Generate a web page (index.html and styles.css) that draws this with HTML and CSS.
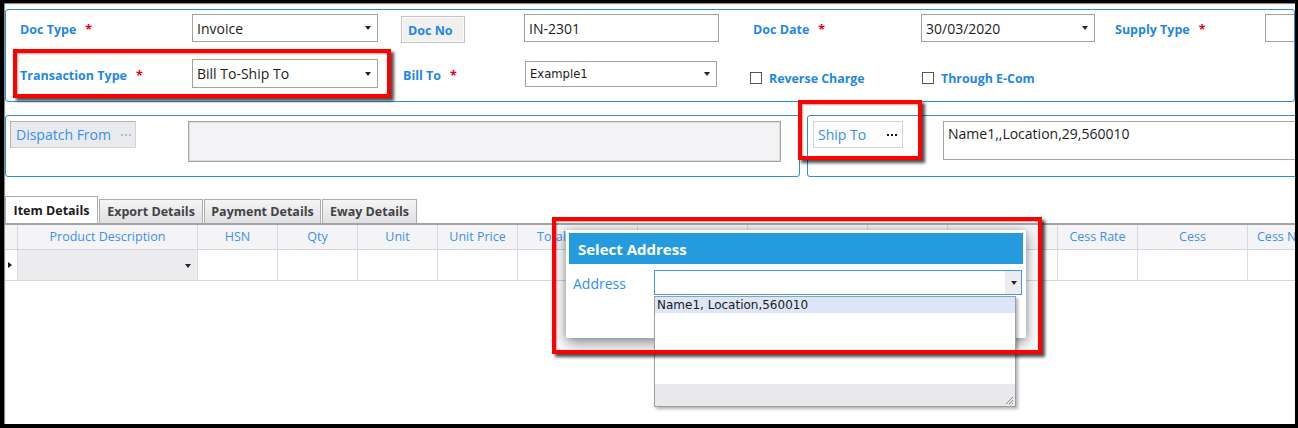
FILE: index.html
```html
<!DOCTYPE html>
<html>
<head>
<meta charset="utf-8">
<title>Invoice</title>
<link rel="stylesheet" href="styles.css">
</head>
<body>
<div class="screen">
  <section class="head-panel">
    <div class="lbl c1">Doc Type<span class="req">*</span></div>
    <div class="combo c2"><span>Invoice</span><i class="arrow"></i></div>
    <div class="btn-docno c4">Doc No</div>
    <div class="input c5">IN-2301</div>
    <div class="lbl lbl-date c7">Doc Date<span class="req">*</span></div>
    <div class="combo c8"><span>30/03/2020</span><i class="arrow"></i></div>
    <div class="lbl c10">Supply Type<span class="req">*</span></div>
    <div class="input input-supply c11"></div>

    <div class="lbl c1 r2">Transaction Type<span class="req">*</span></div>
    <div class="combo c2 r2"><span>Bill To-Ship To</span><i class="arrow"></i></div>
    <div class="lbl lbl-bill c4 r2">Bill To<span class="req">*</span></div>
    <div class="combo combo-small c5 r2"><span>Example1</span><i class="arrow"></i></div>
    <div class="chk c7 r2"><span class="box"></span><span class="chk-text">Reverse Charge</span></div>
    <div class="chk chk-ecom c8 r2"><span class="box"></span><span class="chk-text">Through E-Com</span></div>
  </section>

  <div class="addr-row">
    <div class="addr-panel addr-left">
      <div class="addr-btn addr-btn-dispatch"><span>Dispatch From</span><span class="dots dots-light"><i></i><i></i><i></i></span></div>
      <div class="memo memo-disabled"></div>
    </div>
    <div class="addr-panel addr-right">
      <div class="addr-btn addr-btn-ship"><span>Ship To</span><span class="dots"><i></i><i></i><i></i></span></div>
      <div class="memo memo-ship">Name1,,Location,29,560010</div>
    </div>
  </div>

  <div class="tabs">
    <div class="tab tab-active tab-item">Item Details</div>
    <div class="tab tab-export">Export Details</div>
    <div class="tab tab-payment">Payment Details</div>
    <div class="tab tab-eway">Eway Details</div>
  </div>

  <div class="grid">
    <div class="grow ghead">
      <div class="cell"></div>
      <div class="cell">Product Description</div>
      <div class="cell">HSN</div>
      <div class="cell">Qty</div>
      <div class="cell">Unit</div>
      <div class="cell">Unit Price</div>
      <div class="cell cell-total">Total</div>
      <div class="cell"></div>
      <div class="cell"></div>
      <div class="cell"></div>
      <div class="cell"></div>
      <div class="cell">Cess Rate</div>
      <div class="cell">Cess</div>
      <div class="cell cell-left">Cess N</div>
    </div>
    <div class="grow gdata">
      <div class="cell cell-ind"><i class="ind"></i></div>
      <div class="cell cell-prod"><i class="arrow"></i></div>
      <div class="cell"></div>
      <div class="cell"></div>
      <div class="cell"></div>
      <div class="cell"></div>
      <div class="cell"></div>
      <div class="cell"></div>
      <div class="cell"></div>
      <div class="cell"></div>
      <div class="cell"></div>
      <div class="cell"></div>
      <div class="cell"></div>
      <div class="cell"></div>
    </div>
  </div>

  <div class="dialog">
    <div class="dlg-title">Select Address</div>
    <div class="dlg-body">
      <span class="dlg-label">Address</span>
      <div class="dlg-combo"><span class="dlg-btn"><i class="arrow"></i></span></div>
    </div>
  </div>

  <div class="dropdown">
    <div class="dd-item">Name1, Location,560010</div>
    <div class="dd-fill"></div>
    <div class="dd-foot">
      <svg class="grip" width="10" height="10" viewBox="0 0 10 10">
        <path d="M9 2 L2 9 M9 5 L5 9 M9 8 L8 9" stroke="#8a8a8a" stroke-width="1" fill="none"/>
      </svg>
    </div>
  </div>

  <div class="mark mark-trans"></div>
  <div class="mark mark-ship"></div>
  <div class="mark mark-dialog"></div>
</div>
</body>
</html>
```

FILE: styles.css
```css
* { box-sizing: border-box; }
html, body { margin: 0; padding: 0; }
body {
  background: #000;
  width: 1298px;
  height: 428px;
  overflow: hidden;
  display: flow-root;
  font-family: "Open Sans", "Noto Sans", sans-serif;
}
.screen {
  position: relative;
  margin: 3px 3px 0 4px;
  width: 1291px;
  height: 421px;
  background: #fff;
  overflow: hidden;
  box-shadow: inset 1px 1px 1px rgba(0,0,0,.5);
  display: flow-root;
}

/* ---------- header panel ---------- */
.head-panel {
  margin: 6px 0 0 1px;
  width: 1290px;
  height: 93px;
  border: 1px solid #2d8fd8;
  border-radius: 3px;
  padding: 4px 0 0 14px;
  display: grid;
  grid-template-columns: 172px 186px 23px 123px 195px 31px 171px 174px 20px 150px 1fr;
  grid-template-rows: 28px 29px;
  row-gap: 17px;
  overflow: hidden;
}
.c1 { grid-column: 1; }
.c2 { grid-column: 2; }
.c4 { grid-column: 4; }
.c5 { grid-column: 5; }
.c7 { grid-column: 7; }
.c8 { grid-column: 8; }
.c10 { grid-column: 10; }
.c11 { grid-column: 11; }
.r2 { grid-row: 2; }

.lbl {
  align-self: center;
  padding-top: 3px;
  font-weight: 700;
  font-size: 12.5px;
  color: #1f87e6;
  white-space: nowrap;
}
.lbl-date { padding-left: 3px; }
.lbl-bill { padding-left: 2px; }
.req { color: #e8000b; margin-left: 9px; }

.combo, .input {
  position: relative;
  border: 1px solid #a2a2a2;
  background: #fff;
  display: flex;
  align-items: center;
  padding-left: 4px;
  font-size: 14px;
  color: #1c1c1c;
  white-space: nowrap;
}
.input-supply { width: 80px; }
.combo-small {
  margin-left: 1px;
  width: 192px;
  height: 26px;
  align-self: center;
  font-family: "DejaVu Sans", sans-serif;
  font-size: 11.6px;
  padding-left: 4px;
}
.arrow {
  position: absolute;
  right: 6px;
  top: 50%;
  margin-top: -2px;
  width: 0;
  height: 0;
  border-left: 3.5px solid transparent;
  border-right: 3.5px solid transparent;
  border-top: 4px solid #262626;
}
.btn-docno {
  align-self: start;
  margin-top: 2px;
  width: 64px;
  height: 27px;
  background: #f0f0f0;
  border: 1px solid #c4c4c4;
  box-shadow: inset 0 0 0 1px #fafafa;
  font-weight: 700;
  font-size: 12.5px;
  color: #1f87e6;
  display: flex;
  align-items: center;
  padding: 2px 0 0 6px;
}
.chk {
  align-self: end;
  margin-bottom: 4px;
  display: flex;
  align-items: center;
  height: 12px;
  white-space: nowrap;
}
.chk-ecom { margin-left: 1px; }
.chk .box {
  width: 12px;
  height: 12px;
  border: 1px solid #555;
  background: #fff;
}
.chk-text {
  margin-left: 7px;
  font-weight: 700;
  font-size: 12.4px;
  color: #1f87e6;
}

/* ---------- address row ---------- */
.addr-row {
  display: flex;
  gap: 7px;
  margin: 13px 0 0 1px;
}
.addr-panel {
  height: 62px;
  border: 1px solid #2d8fd8;
  border-radius: 3px;
  display: flex;
  align-items: flex-start;
  flex: 0 0 auto;
}
.addr-panel > * { flex-shrink: 0; }
.addr-left { width: 795px; padding: 5px 4px; }
.addr-right { width: 560px; padding: 5px 5px; }
.addr-btn {
  height: 27px;
  display: flex;
  align-items: center;
  justify-content: space-between;
  font-size: 14px;
  color: #3590f0;
  white-space: nowrap;
}
.addr-btn-dispatch {
  width: 126px;
  background: #e9eaee;
  border: 1px solid #d2d2d6;
  border-left-color: #b3b3b3;
  border-top-color: #b3b3b3;
  padding: 0 4px 0 5px;
}
.addr-btn-ship {
  width: 90px;
  background: #fdfdfd;
  border: 1px solid #d4d4d4;
  padding: 0 5px 0 4px;
}
.dots {
  display: flex;
  gap: 2px;
  align-items: center;
  margin-top: 1px;
}
.dots i {
  width: 2px;
  height: 2px;
  background: #151515;
}
.dots-light i { background: #bcbcc0; }
.memo {
  border: 1px solid #a5a5a5;
  box-shadow: inset 0 0 0 1px #dcdcdc;
  font-size: 14px;
  color: #1c1c1c;
  padding: 2px 4px;
  white-space: nowrap;
}
.memo-disabled {
  margin-left: 52px;
  width: 593px;
  height: 41px;
  background: #f3f3f5;
}
.memo-ship {
  margin-left: 40px;
  width: 420px;
  height: 39px;
  background: #fff;
  box-shadow: none;
}

/* ---------- tabs ---------- */
.tabs {
  display: flex;
  align-items: flex-end;
  margin: 19px 0 0 1px;
  height: 27px;
}
.tab {
  height: 24px;
  margin-left: 1px;
  border: 1px solid #acacac;
  border-bottom: none;
  background: linear-gradient(#f5f5f7, #e0e0e4);
  font-weight: 700;
  font-size: 12.5px;
  color: #434343;
  display: flex;
  align-items: center;
  justify-content: center;
  white-space: nowrap;
}
.tab-active {
  height: 27px;
  margin-left: 0;
  background: #fff;
  color: #1b1b1b;
}
.tab-item { width: 93px; }
.tab-export { width: 104px; }
.tab-payment { width: 117px; }
.tab-eway { width: 95px; }

/* ---------- grid ---------- */
.grid {
  margin-left: 1px;
  width: 1400px;
  border-top: 2px solid #a3a3a3;
}
.grow {
  display: grid;
  grid-template-columns: 13px 180px 80px 80px 80px 80px 120px 110px 120px 80px 110px 80px 110px 100px;
}
.ghead .cell {
  height: 25px;
  padding-bottom: 2px;
  background: #f4f4f6;
  border-right: 1px solid #d8d8de;
  border-bottom: 1px solid #d3d3da;
  color: #3b91ee;
  font-size: 12.5px;
  display: flex;
  align-items: center;
  justify-content: center;
  white-space: nowrap;
  overflow: hidden;
}
.ghead .cell-left { justify-content: flex-start; padding-left: 9px; }
.ghead .cell-total { justify-content: flex-start; padding-left: 19px; }
.gdata .cell {
  position: relative;
  height: 31px;
  border-right: 1px solid #dcdce2;
  border-bottom: 1px solid #d6d6dc;
}
.gdata .cell-prod { background: #ececef; }
.gdata .cell-prod .arrow { right: 6px; margin-top: -1px; }
.ind {
  position: absolute;
  left: 3px;
  top: 12px;
  width: 0;
  height: 0;
  border-left: 4px solid #1a1a1a;
  border-top: 3.5px solid transparent;
  border-bottom: 3.5px solid transparent;
}

/* ---------- dialog ---------- */
.dialog {
  position: absolute;
  left: 562px;
  top: 227px;
  width: 460px;
  height: 108px;
  padding: 3px;
  background: #fff;
  box-shadow: 0 6px 14px rgba(0,0,0,.4), 0 0 6px rgba(0,0,0,.2);
  z-index: 5;
}
.dlg-title {
  height: 31px;
  line-height: 32px;
  padding-left: 9px;
  background: #249bdc;
  color: #fff;
  font-weight: 700;
  font-size: 15px;
}
.dlg-body {
  display: flex;
  align-items: center;
  margin-top: 6px;
  padding-left: 4px;
}
.dlg-label {
  width: 81px;
  padding-top: 2px;
  font-size: 14px;
  color: #2f8ff0;
}
.dlg-combo {
  width: 368px;
  height: 25px;
  border: 1px solid #3d9cf0;
  background: #fff;
  display: flex;
  justify-content: flex-end;
}
.dlg-btn {
  position: relative;
  width: 16px;
  height: 100%;
  background: #ececee;
}
.dlg-btn .arrow { right: 4.5px; }

.dropdown {
  position: absolute;
  left: 650px;
  top: 293px;
  width: 362px;
  height: 111px;
  border: 1px solid #9e9e9e;
  background: #fff;
  box-shadow: 2px 2px 3px rgba(0,0,0,.3);
  display: flex;
  flex-direction: column;
  z-index: 6;
}
.dd-item {
  height: 16px;
  line-height: 16px;
  padding-left: 2px;
  background: #dde6f8;
  font-family: "DejaVu Sans", sans-serif;
  font-size: 12px;
  color: #1a1a1a;
  white-space: nowrap;
}
.dd-fill { flex: 1; }
.dd-foot {
  position: relative;
  height: 22px;
  background: #e9e9ed;
}
.grip { position: absolute; right: 1px; bottom: 1px; }

/* ---------- red annotation marks ---------- */
.mark {
  position: absolute;
  border: 4px solid #ff0000;
  box-shadow: 3px 3px 3px rgba(0,0,0,.7), inset 1px 1px 2px rgba(0,0,0,.35);
  z-index: 10;
}
.mark-trans { left: 9px; top: 46px; width: 378px; height: 49px; }
.mark-ship { left: 794px; top: 97px; width: 124px; height: 60px; }
.mark-dialog { left: 548px; top: 214px; width: 490px; height: 137px; }
```
